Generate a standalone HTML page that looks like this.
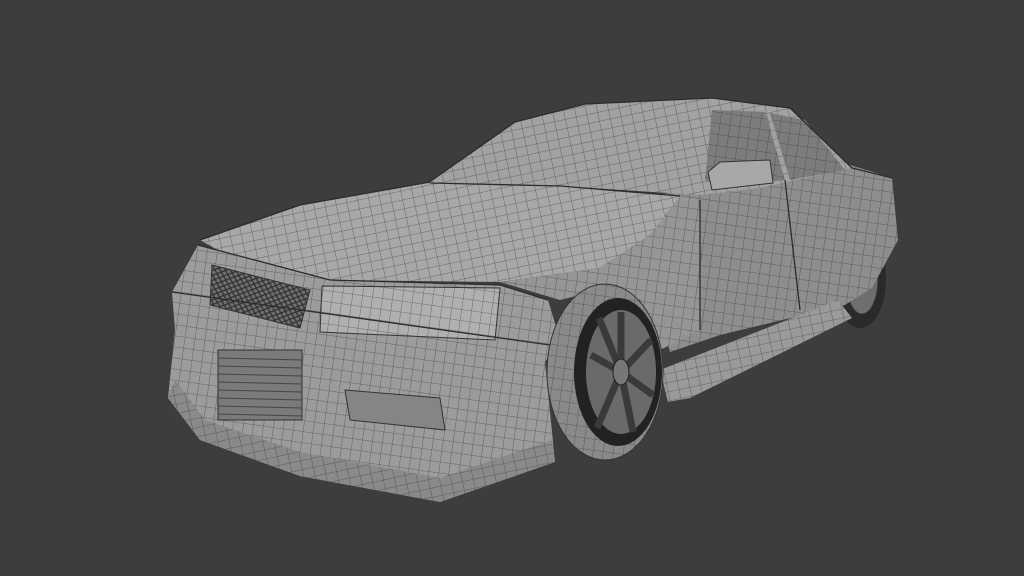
<!DOCTYPE html>
<html><head><meta charset="utf-8"><style>
html,body{margin:0;padding:0;background:#3d3d3d;width:1024px;height:576px;overflow:hidden}
svg{display:block}
</style></head><body>
<svg width="1024" height="576" viewBox="0 0 1024 576" xmlns="http://www.w3.org/2000/svg">
<defs>
<pattern id="g1" width="11" height="9" patternUnits="userSpaceOnUse" patternTransform="rotate(-12)">
<path d="M0 0H11M0 0V9" stroke="#333" stroke-width="0.8" fill="none" opacity="0.7"/>
</pattern>
<pattern id="g2" width="10" height="11" patternUnits="userSpaceOnUse" patternTransform="rotate(8)">
<path d="M0 0H10M0 0V11" stroke="#333" stroke-width="0.8" fill="none" opacity="0.7"/>
</pattern>
<pattern id="mesh" width="7" height="6" patternUnits="userSpaceOnUse" patternTransform="rotate(20)">
<path d="M0 0L7 6M7 0L0 6" stroke="#2e2e2e" stroke-width="1.2"/>
</pattern>
</defs>
<rect width="1024" height="576" fill="#3d3d3d"/>
<ellipse cx="860" cy="280" rx="26" ry="48" fill="#2a2a2a"/>
<ellipse cx="862" cy="280" rx="16" ry="34" fill="#6e6e6e" stroke="#333"/>
<polygon points="655,195 850,165 892,178 898,240 872,288 845,305 720,335 670,352 655,300" fill="#8e8e8e"/>
<polygon points="655,195 850,165 892,178 898,240 872,288 845,305 720,335 670,352 655,300" fill="url(#g2)"/>
<polygon points="660,370 838,300 852,318 690,398 668,402" fill="#9a9a9a"/>
<polygon points="660,370 838,300 852,318 690,398 668,402" fill="url(#g1)"/>
<polygon points="428,183 515,122 585,104 712,98 790,108 852,168 760,188 700,195 560,186" fill="#a2a2a2"/>
<polygon points="428,183 515,122 585,104 712,98 790,108 852,168 760,188 700,195 560,186" fill="url(#g1)"/>
<polygon points="712,110 765,112 785,180 720,188 705,180" fill="#7c7c7c"/>
<polygon points="770,113 805,120 845,170 790,180" fill="#7c7c7c"/>
<polygon points="712,110 765,112 785,180 720,188 705,180" fill="url(#g2)"/>
<polygon points="770,113 805,120 845,170 790,180" fill="url(#g2)"/>
<polygon points="708,172 720,162 770,160 773,183 712,190" fill="#a8a8a8" stroke="#333"/>
<polygon points="200,240 300,205 430,182 560,186 680,196 650,235 600,268 500,282 330,280 250,268" fill="#a8a8a8"/>
<polygon points="200,240 300,205 430,182 560,186 680,196 650,235 600,268 500,282 330,280 250,268" fill="url(#g1)"/>
<polygon points="500,282 600,268 650,235 680,196 700,200 700,330 660,350 640,300 600,290 560,300" fill="#969696"/>
<polygon points="500,282 600,268 650,235 680,196 700,200 700,330 660,350 640,300 600,290 560,300" fill="url(#g2)"/>
<polygon points="172,292 198,245 330,280 500,285 548,300 560,340 545,362 555,462 440,502 300,476 200,440 168,398 175,330" fill="#9c9c9c"/>
<polygon points="172,292 198,245 330,280 500,285 548,300 560,340 545,362 555,462 440,502 300,476 200,440 168,398 175,330" fill="url(#g2)"/>
<polygon points="168,398 200,440 300,476 440,502 555,462 552,440 440,478 300,452 205,420 175,380" fill="#8a8a8a"/>
<polygon points="168,398 200,440 300,476 440,502 555,462 552,440 440,478 300,452 205,420 175,380" fill="url(#g1)"/>
<polygon points="212,265 310,290 300,328 210,305" fill="#6f6f6f" stroke="#333"/>
<polygon points="212,265 310,290 300,328 210,305" fill="url(#mesh)"/>
<polygon points="322,286 500,288 495,340 320,332" fill="#b0b0b0" stroke="#333"/>
<polygon points="322,286 500,288 495,340 320,332" fill="url(#g2)"/>
<rect x="218" y="350" width="84" height="70" fill="#7a7a7a" stroke="#333"/>
<g stroke="#444" stroke-width="1">
<line x1="218" y1="358" x2="302" y2="360"/><line x1="218" y1="366" x2="302" y2="368"/><line x1="218" y1="374" x2="302" y2="376"/><line x1="218" y1="382" x2="302" y2="384"/><line x1="218" y1="390" x2="302" y2="392"/><line x1="218" y1="398" x2="302" y2="400"/><line x1="218" y1="406" x2="302" y2="408"/><line x1="218" y1="414" x2="302" y2="416"/>
</g>
<polygon points="345,390 440,398 445,430 350,420" fill="#858585" stroke="#333"/>
<ellipse cx="605" cy="372" rx="58" ry="88" fill="#8a8a8a" stroke="#333"/>
<ellipse cx="605" cy="372" rx="58" ry="88" fill="url(#g2)"/>
<ellipse cx="618" cy="372" rx="44" ry="74" fill="#222"/>
<ellipse cx="621" cy="372" rx="35" ry="62" fill="#6a6a6a"/>
<g stroke="#3a3a3a" stroke-width="7">
<line x1="621" y1="372" x2="621" y2="312"/><line x1="621" y1="372" x2="651" y2="340"/><line x1="621" y1="372" x2="653" y2="395"/><line x1="621" y1="372" x2="633" y2="432"/><line x1="621" y1="372" x2="597" y2="428"/><line x1="621" y1="372" x2="591" y2="355"/><line x1="621" y1="372" x2="599" y2="318"/>
</g>
<ellipse cx="621" cy="372" rx="8" ry="13" fill="#777" stroke="#222"/>
<g fill="none" stroke="#2c2c2c" stroke-width="1.3">
<polyline points="428,183 515,122 585,104 712,98 790,108 852,168 892,178"/>
<polyline points="200,240 300,205 430,182"/>
<polyline points="430,183 560,186 680,196"/>
<polyline points="198,245 330,280 500,285 548,300"/>
<line x1="700" y1="200" x2="700" y2="330"/>
<line x1="785" y1="180" x2="800" y2="310"/>
<line x1="172" y1="292" x2="550" y2="345"/>
</g>
</svg>
</body></html>
